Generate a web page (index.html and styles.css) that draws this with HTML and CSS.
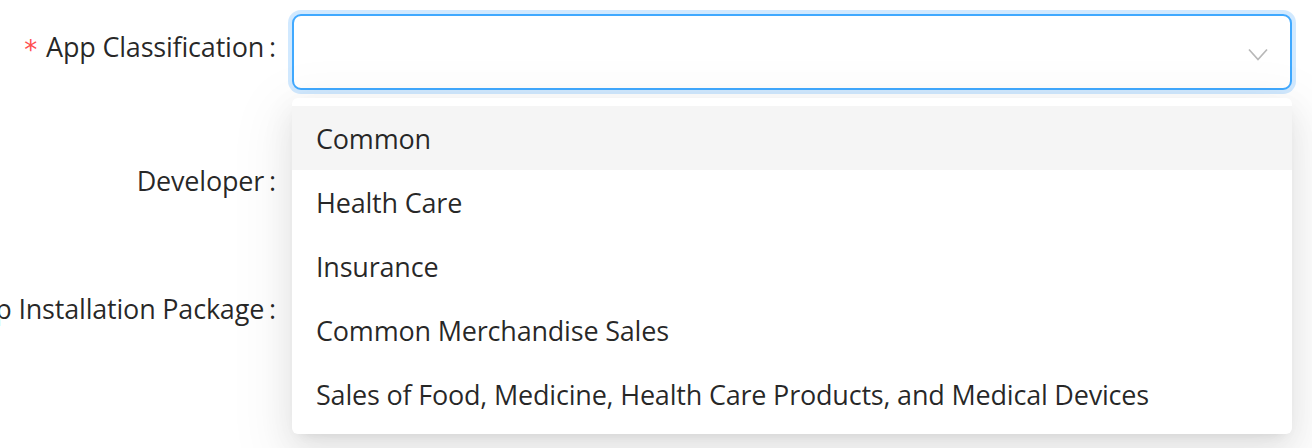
FILE: index.html
```html
<!DOCTYPE html>
<html>
<head>
<meta charset="utf-8">
<link rel="stylesheet" href="styles.css">
</head>
<body>
<div class="form">
  <div class="row row1">
    <div class="label"><span class="req">*</span>App Classification</div>
    <div class="control">
      <div class="select">
        <svg class="arrow" width="20" height="13" viewBox="0 0 20 13"><path d="M1 1.5 L10 11.5 L19 1.5" fill="none" stroke="#b8b8b8" stroke-width="1.7"/></svg>
      </div>
      <div class="dropdown">
        <div class="option active">Common</div>
        <div class="option">Health Care</div>
        <div class="option">Insurance</div>
        <div class="option">Common Merchandise Sales</div>
        <div class="option">Sales of Food, Medicine, Health Care Products, and Medical Devices</div>
      </div>
    </div>
  </div>
  <div class="row row2">
    <div class="label">Developer</div>
    <div class="control"><div class="input"></div></div>
  </div>
  <div class="row row3">
    <div class="label">App Installation Package</div>
    <div class="control"></div>
  </div>
</div>
</body>
</html>
```
FILE: styles.css
```css
html, body {
  margin: 0;
  background: #fff;
}
body {
  font-family: "Open Sans", "Noto Sans", sans-serif;
  font-size: 27px;
  letter-spacing: -0.2px;
  color: rgba(0, 0, 0, 0.85);
}
.form {
  padding-top: 14px;
  min-height: 448px;
  box-sizing: border-box;
}
.row {
  display: flex;
}
.row1 {
  margin-bottom: 58px;
}
.row2 {
  margin-bottom: 64px;
}
.label {
  width: 292px;
  flex: none;
  display: flex;
  justify-content: flex-end;
  white-space: nowrap;
  height: 64px;
  line-height: 64px;
  padding-top: 1px;
  box-sizing: border-box;
}
.label::after {
  content: ":";
  margin: 0 16px 0 5px;
}
.req {
  color: #ff4d4f;
  margin-right: 9px;
  font-family: "DejaVu Sans", sans-serif;
  font-size: 26px;
  position: relative;
  top: 3px;
}
.control {
  width: 1000px;
  flex: none;
  position: relative;
}
.select {
  height: 76px;
  box-sizing: border-box;
  border: 2px solid #40a9ff;
  border-radius: 9px;
  box-shadow: 0 0 0 4px rgba(24, 144, 255, 0.2);
  background: #fff;
  display: flex;
  align-items: center;
  justify-content: flex-end;
  padding-right: 22px;
}
.arrow {
  display: block;
  margin-top: 4px;
}
.input {
  height: 64px;
  box-sizing: border-box;
  border: 2px solid #d9d9d9;
  border-radius: 8px;
}
.dropdown {
  position: absolute;
  top: 84px;
  left: 0;
  width: 1000px;
  padding: 8px 0;
  background: #fff;
  border-radius: 6px;
  z-index: 2;
  box-shadow: 0 6px 12px -8px rgba(0, 0, 0, 0.12), 0 12px 32px 0 rgba(0, 0, 0, 0.08), 0 18px 56px 16px rgba(0, 0, 0, 0.05);
}
.option {
  height: 64px;
  line-height: 64px;
  padding: 1px 24px 0;
  box-sizing: border-box;
  white-space: nowrap;
}
.option.active {
  background: #f5f5f5;
}
```
